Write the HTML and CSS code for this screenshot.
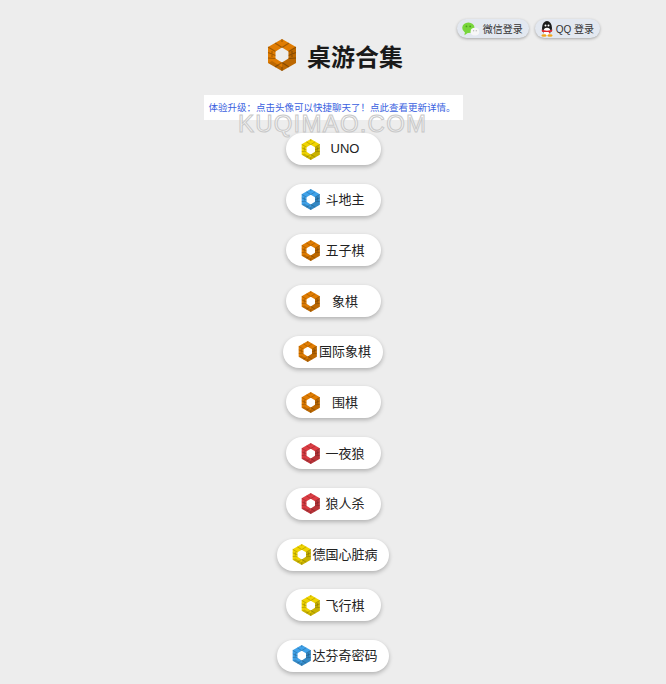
FILE: index.html
```html
<!DOCTYPE html>
<html lang="zh-CN">
<head>
    <meta charset="UTF-8">
    <meta name="viewport" content="width=device-width, initial-scale=1.0">
    <title>桌游合集</title>
    <link rel="stylesheet" href="styles.css">
</head>
<body>
    <svg class="defs" width="0" height="0">
        <symbol id="hex" viewBox="0 0 30 32">
            <!-- base ring -->
            <path fill="currentColor" fill-rule="evenodd" d="M15 0 29 8V24L15 32 1 24V8ZM15 8.500 8.500 12.500V19.500L15 23.500 21.500 19.500V12.500Z"/>
            <!-- shaded lower faces -->
            <path fill="#000" fill-opacity=".16" d="M29 8V24L15 32V23.500L21.500 19.500V12.500ZM1 24 15 32V28L5 22Z"/>
            <!-- brick joints -->
            <path fill="none" stroke="#000" stroke-opacity=".28" stroke-width="1.100" d="M1 8 8.500 12.500M29 8 21.500 12.500M15 0V3M8 4 15 8.500M22 4 15 8.500M1 13.500 8.500 16.500M1 19 8.500 19.500M29 13.500 21.500 16.500M29 19 21.500 19.500M5 12V18M25 12V18M8 28 15 23.500M22 28 15 23.500M15 28V32"/>
        </symbol>
    </svg>

    <div class="login-bar">
        <a class="login-btn login-wechat">
            <svg class="login-icon" viewBox="0 0 20 16">
                <ellipse cx="7" cy="6.500" rx="7" ry="6" fill="#78d63c"/>
                <path d="M3 11 2.500 15 7 12Z" fill="#78d63c"/>
                <circle cx="4.800" cy="5" r="1" fill="#4b9a22"/>
                <circle cx="9" cy="5" r="1" fill="#4b9a22"/>
                <ellipse cx="14.500" cy="11" rx="5" ry="4.300" fill="#f7f7f7"/>
                <circle cx="13" cy="10" r=".7" fill="#999"/>
                <circle cx="16" cy="10" r=".7" fill="#999"/>
            </svg>
            <span>微信登录</span>
        </a>
        <a class="login-btn login-qq">
            <svg class="login-icon-qq" viewBox="0 0 14 16">
                <ellipse cx="7" cy="7" rx="5" ry="7" fill="#1b1b1b"/>
                <ellipse cx="7" cy="10.500" rx="3.600" ry="3.800" fill="#fff"/>
                <path d="M1.500 8.500C4 10 10 10 12.500 8.500L12 10.500 10 11V13L8.500 11H3L2 10.500Z" fill="#e0242a"/>
                <ellipse cx="4" cy="14.500" rx="2.600" ry="1.300" fill="#f2a51a"/>
                <ellipse cx="10" cy="14.500" rx="2.600" ry="1.300" fill="#f2a51a"/>
                <circle cx="5.500" cy="4.500" r="1" fill="#fff"/>
                <circle cx="8.500" cy="4.500" r="1" fill="#fff"/>
            </svg>
            <span>QQ 登录</span>
        </a>
    </div>

    <h1 class="page-title">
        <svg class="title-icon orange"><use href="#hex"/></svg>
        <span>桌游合集</span>
    </h1>

    <div class="notice">体验升级：点击头像可以快捷聊天了！点此查看更新详情。</div>
    <div class="watermark">KUQIMAO.COM</div>

    <div class="game-list">
        <a class="game-btn"><svg class="game-icon yellow"><use href="#hex"/></svg><span>UNO</span></a>
        <a class="game-btn"><svg class="game-icon blue"><use href="#hex"/></svg><span>斗地主</span></a>
        <a class="game-btn"><svg class="game-icon orange"><use href="#hex"/></svg><span>五子棋</span></a>
        <a class="game-btn"><svg class="game-icon orange"><use href="#hex"/></svg><span>象棋</span></a>
        <a class="game-btn"><svg class="game-icon orange"><use href="#hex"/></svg><span>国际象棋</span></a>
        <a class="game-btn"><svg class="game-icon orange"><use href="#hex"/></svg><span>围棋</span></a>
        <a class="game-btn"><svg class="game-icon red"><use href="#hex"/></svg><span>一夜狼</span></a>
        <a class="game-btn"><svg class="game-icon red"><use href="#hex"/></svg><span>狼人杀</span></a>
        <a class="game-btn"><svg class="game-icon yellow"><use href="#hex"/></svg><span>德国心脏病</span></a>
        <a class="game-btn"><svg class="game-icon yellow"><use href="#hex"/></svg><span>飞行棋</span></a>
        <a class="game-btn"><svg class="game-icon blue"><use href="#hex"/></svg><span>达芬奇密码</span></a>
    </div>
</body>
</html>
```

FILE: styles.css
```css
body {
    margin: 0;
    position: relative;
    height: 684px;
    overflow: hidden;
    background-color: #ededed;
    color: #222;
    font-family: "Liberation Sans", "Noto Sans CJK SC", sans-serif;
}

.defs {
    position: absolute;
}

.orange { color: #e07c02; }
.yellow { color: #f0d400; }
.blue { color: #3fa2ea; }
.red { color: #dc3d44; }

/* Login buttons */
.login-bar {
    display: flex;
    justify-content: flex-end;
    gap: 6px;
    padding: 19px 66px 0 0;
}

.login-btn {
    display: flex;
    align-items: center;
    height: 19px;
    padding: 0 6px 0 5px;
    border-radius: 10px;
    background-color: #e3e8f0;
    box-shadow: 0 1px 3px rgba(0, 0, 0, 0.3);
    font-size: 10px;
    color: #333;
}

.login-icon {
    width: 18px;
    height: 14px;
    margin-right: 3px;
}

.login-icon-qq {
    width: 14px;
    height: 16px;
    margin-right: 2px;
}

/* Title */
.page-title {
    display: flex;
    justify-content: center;
    align-items: center;
    gap: 10px;
    height: 32px;
    margin: 1px 0 24px;
    padding-left: 4px;
    font-size: 24px;
    font-weight: bold;
    color: #1a1a1a;
}

.title-icon {
    width: 30px;
    height: 32px;
}

/* Notice */
.notice {
    width: 249px;
    height: 25px;
    margin: 0 auto 13px;
    padding: 0 5px;
    background-color: #fff;
    font-size: 9.500px;
    line-height: 25px;
    color: #3a5fe0;
    white-space: nowrap;
}

.watermark {
    position: absolute;
    top: 110px;
    left: 238px;
    font-size: 24px;
    letter-spacing: 1.200px;
    color: rgba(255, 255, 255, 0.3);
    -webkit-text-stroke: 1px #c8c8c8;
    pointer-events: none;
}

/* Game list */
.game-list {
    display: flex;
    flex-direction: column;
    align-items: center;
    gap: 18.700px;
}

.game-btn {
    display: flex;
    align-items: center;
    height: 32px;
    padding: 0 11.500px 0 15px;
    border-radius: 16px;
    background-color: #fff;
    box-shadow: 0 2px 4px rgba(0, 0, 0, 0.25);
    font-size: 13px;
    color: #222;
}

.game-btn span {
    min-width: 48px;
    padding-bottom: 2px;
    text-align: center;
}

.game-icon {
    width: 19.500px;
    height: 21px;
    margin-right: 1px;
}
```
